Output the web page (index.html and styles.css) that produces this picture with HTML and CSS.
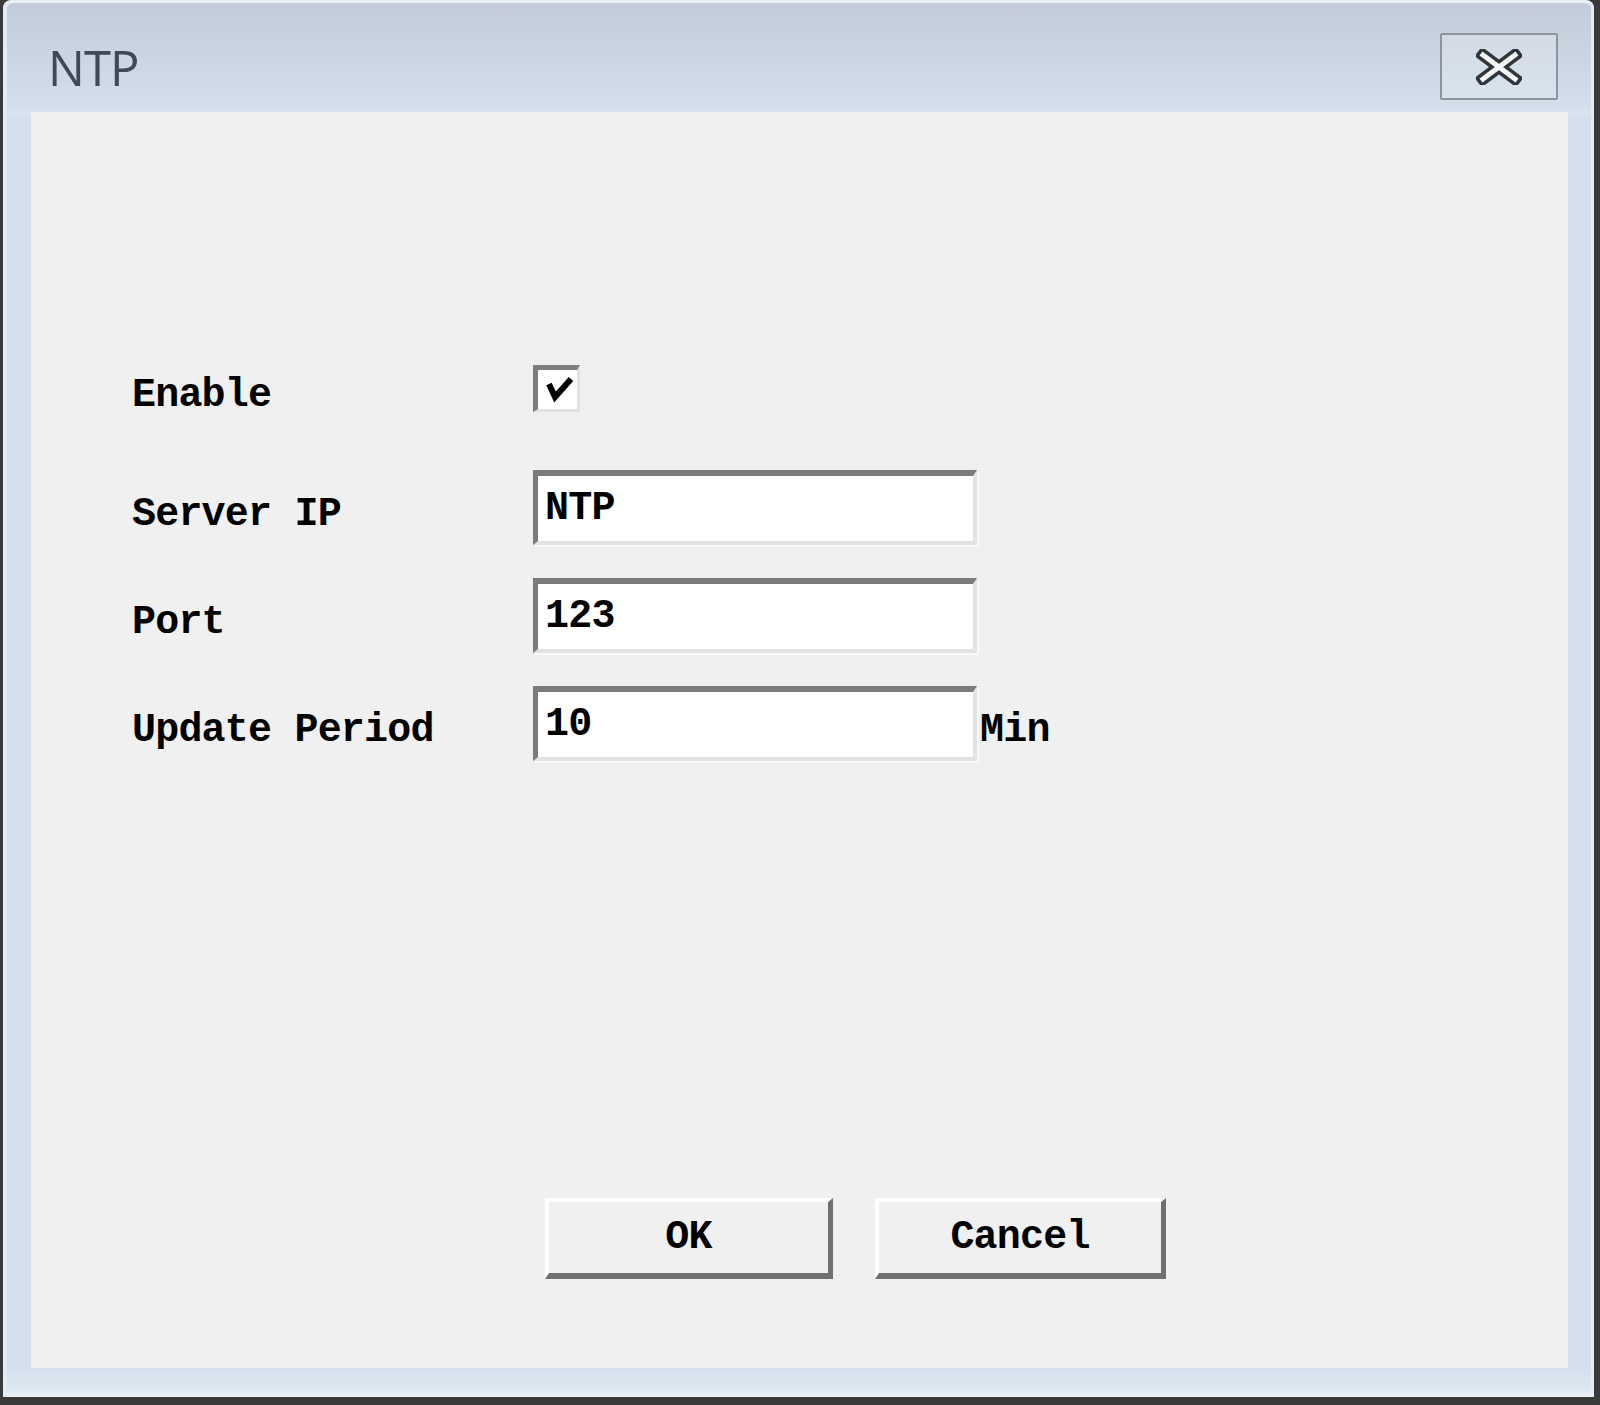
FILE: index.html
```html
<!DOCTYPE html>
<html>
  <head>
    <title>NTP</title>
    <link rel="stylesheet" href="styles.css">
  </head>
  <body>
    <div class="window">
      <div class="titlebar">
        <span class="title">NTP</span>
        <button class="close" title="Close">
          <svg width="46" height="36" viewBox="0 0 46 36">
            <path d="M7 6 L39 30 M39 6 L7 30" stroke="#2f353b" stroke-width="12" stroke-linecap="square" fill="none"/>
            <path d="M7 6 L39 30 M39 6 L7 30" stroke="#f4f6f8" stroke-width="5" stroke-linecap="square" fill="none"/>
          </svg>
        </button>
      </div>

      <div class="panel">
        <div class="form">
          <div class="row row-check">
            <span class="label">Enable</span>
            <span class="check">
              <svg width="39" height="39" viewBox="0 0 39 39">
                <polyline points="11,14 17,27 33,9" stroke="#000" stroke-width="6" fill="none"/>
              </svg>
            </span>
          </div>
          <div class="row">
            <label class="label" for="server">Server IP</label>
            <input class="field" id="server" type="text" value="NTP">
          </div>
          <div class="row">
            <label class="label" for="port">Port</label>
            <input class="field" id="port" type="text" value="123">
          </div>
          <div class="row">
            <label class="label" for="period">Update Period</label>
            <input class="field" id="period" type="text" value="10">
            <span class="unit">Min</span>
          </div>
        </div>

        <div class="actions">
          <button class="btn">OK</button>
          <button class="btn btn-wide">Cancel</button>
        </div>
      </div>
    </div>
  </body>
</html>
```

FILE: styles.css
```css
html, body {
  margin: 0;
  height: 100%;
}

body {
  background-color: #3a3a3a;
  overflow: hidden;
}

.window {
  box-sizing: border-box;
  height: 1397px;
  margin: 0 6px 0 3px;
  padding: 0 26px 29px 28px;
  display: flex;
  flex-direction: column;
  border-radius: 8px 8px 0 0;
  border-top: 3px solid #e9eff5;
  background: linear-gradient(to bottom, #c3ccd8 0, #d3dfeb 105px, #dbe5ef 109px, #d4e1ed 112px, #d4e1ed 1365px, #dce6ef 1385px, #eef3f8 1394px);
  box-shadow: inset 4px 0 0 #e3ecf5, inset -3px 0 0 #e3ecf5;
}

.titlebar {
  box-sizing: border-box;
  height: 109px;
  padding-top: 18px;
  display: flex;
  align-items: center;
  justify-content: space-between;
}

.title {
  padding-left: 17px;
  font-family: "Open Sans", "Noto Sans", sans-serif;
  font-size: 49px;
  color: #3e4a56;
  letter-spacing: -1px;
}

.close {
  box-sizing: border-box;
  width: 118px;
  height: 67px;
  margin-right: 10px;
  padding: 0;
  border: 2px solid #8d949e;
  border-radius: 2px;
  background: linear-gradient(to bottom, #d3dbe5, #d8e3ee);
  display: flex;
  align-items: center;
  justify-content: center;
}

.panel {
  flex: 1;
  display: flex;
  flex-direction: column;
  background-color: #f0f0f0;
}

.form {
  padding: 253px 0 0 101px;
}

.row {
  display: flex;
  align-items: center;
  margin-bottom: 33px;
}

.row-check {
  height: 47px;
  margin-bottom: 58px;
}

.label,
.field,
.unit,
.btn {
  font-family: "Liberation Mono", "Courier New", monospace;
  font-weight: bold;
  font-size: 40px;
  letter-spacing: -0.8px;
  color: #000;
}

.label {
  flex: none;
  width: 401px;
  padding-top: 14px;
}

.check {
  box-sizing: border-box;
  width: 47px;
  height: 47px;
  background: #fff;
  border-top: 5px solid #7d7d7d;
  border-left: 5px solid #7d7d7d;
  border-right: 3px solid #e2e2e2;
  border-bottom: 3px solid #e2e2e2;
}

.check svg {
  display: block;
}

.field {
  box-sizing: border-box;
  width: 444px;
  height: 75px;
  padding: 0 0 0 7px;
  margin: 0;
  background: #fff;
  border-top: 6px solid #7b7b7b;
  border-left: 5px solid #7b7b7b;
  border-right: 4px solid #e3e3e3;
  border-bottom: 4px solid #e3e3e3;
  box-shadow: 2px 2px 0 #f9f9f9;
  outline: none;
}

.unit {
  margin-left: 3px;
  padding-top: 14px;
}

.actions {
  margin-top: auto;
  padding: 0 0 89px 514px;
  display: flex;
  gap: 42px;
}

.btn {
  box-sizing: border-box;
  width: 288px;
  height: 81px;
  padding: 0;
  background: #f0f0f0;
  border-style: solid;
  border-width: 4px 5px 6px 4px;
  border-color: #fff #6f6f6f #6f6f6f #fff;
  cursor: pointer;
}

.btn-wide {
  width: 291px;
}
```
